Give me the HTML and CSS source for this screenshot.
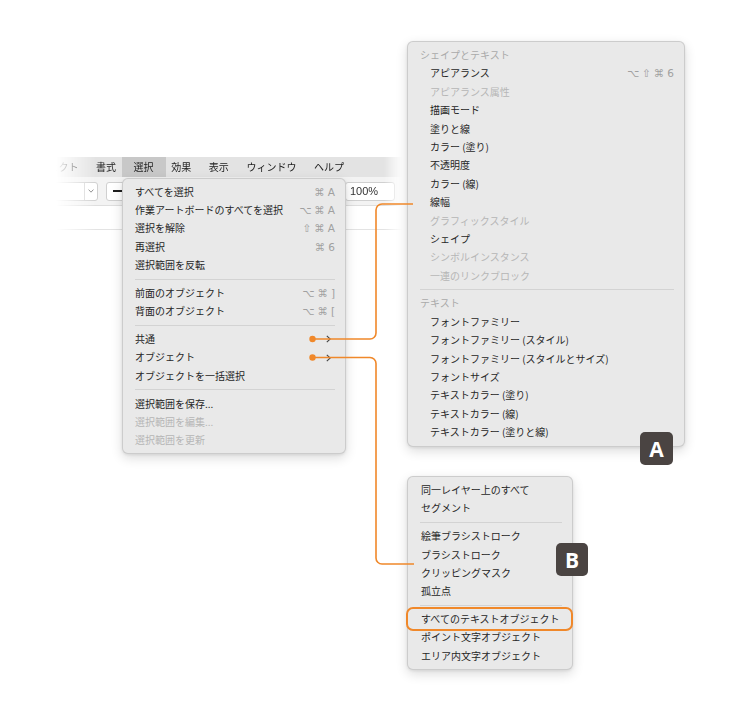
FILE: index.html
```html
<!DOCTYPE html>
<html lang="ja">
<head>
<meta charset="utf-8">
<title>選択メニュー</title>
<link rel="stylesheet" href="styles.css">
</head>
<body>
<div class="canvas">
  <div class="chrome">
    <div class="menubar">
      <span class="mb">オブジェクト</span>
      <span class="mb">書式</span>
      <span class="mb sel">選択</span>
      <span class="mb">効果</span>
      <span class="mb">表示</span>
      <span class="mb">ウィンドウ</span>
      <span class="mb">ヘルプ</span>
    </div>
    <div class="toolbar">
      <div class="field f1"><span class="ftxt"></span><span class="fchev"><svg width="6" height="4" viewBox="0 0 6 4"><path d="M0.6 0.6 L3 3.2 L5.4 0.6" fill="none" stroke="#777" stroke-width="0.9"/></svg></span></div>
      <div class="field f2"><span class="dash"></span></div>
      <div class="field f3">100%</div>
    </div>
    <div class="subbar"></div>
  </div>

  <div class="menu main">
    <div class="row"><span>すべてを選択</span><span class="sc"><span>⌘</span><span>A</span></span></div>
    <div class="row"><span>作業アートボードのすべてを選択</span><span class="sc"><span>⌥</span><span>⌘</span><span>A</span></span></div>
    <div class="row"><span>選択を解除</span><span class="sc"><span>⇧</span><span>⌘</span><span>A</span></span></div>
    <div class="row"><span>再選択</span><span class="sc"><span>⌘</span><span>6</span></span></div>
    <div class="row"><span>選択範囲を反転</span></div>
    <div class="sep"></div>
    <div class="row"><span>前面のオブジェクト</span><span class="sc"><span>⌥</span><span>⌘</span><span>]</span></span></div>
    <div class="row"><span>背面のオブジェクト</span><span class="sc"><span>⌥</span><span>⌘</span><span>[</span></span></div>
    <div class="sep"></div>
    <div class="row"><span>共通</span><svg class="chev" width="5" height="8" viewBox="0 0 5 8"><path d="M0.8 0.8 L4.2 4 L0.8 7.2" fill="none" stroke="#444" stroke-width="1.1"/></svg></div>
    <div class="row"><span>オブジェクト</span><svg class="chev" width="5" height="8" viewBox="0 0 5 8"><path d="M0.8 0.8 L4.2 4 L0.8 7.2" fill="none" stroke="#444" stroke-width="1.1"/></svg></div>
    <div class="row"><span>オブジェクトを一括選択</span></div>
    <div class="sep"></div>
    <div class="row"><span>選択範囲を保存...</span></div>
    <div class="row dis"><span>選択範囲を編集...</span></div>
    <div class="row dis"><span>選択範囲を更新</span></div>
  </div>

  <div class="menu suba">
    <div class="row hdr"><span>シェイプとテキスト</span></div>
    <div class="row ind"><span>アピアランス</span><span class="sc"><span>⌥</span><span>⇧</span><span>⌘</span><span>6</span></span></div>
    <div class="row ind dis"><span>アピアランス属性</span></div>
    <div class="row ind"><span>描画モード</span></div>
    <div class="row ind"><span>塗りと線</span></div>
    <div class="row ind"><span>カラー (塗り)</span></div>
    <div class="row ind"><span>不透明度</span></div>
    <div class="row ind"><span>カラー (線)</span></div>
    <div class="row ind"><span>線幅</span></div>
    <div class="row ind dis"><span>グラフィックスタイル</span></div>
    <div class="row ind"><span>シェイプ</span></div>
    <div class="row ind dis"><span>シンボルインスタンス</span></div>
    <div class="row ind dis"><span>一連のリンクブロック</span></div>
    <div class="sep"></div>
    <div class="row hdr"><span>テキスト</span></div>
    <div class="row ind"><span>フォントファミリー</span></div>
    <div class="row ind"><span>フォントファミリー (スタイル)</span></div>
    <div class="row ind"><span>フォントファミリー (スタイルとサイズ)</span></div>
    <div class="row ind"><span>フォントサイズ</span></div>
    <div class="row ind"><span>テキストカラー (塗り)</span></div>
    <div class="row ind"><span>テキストカラー (線)</span></div>
    <div class="row ind"><span>テキストカラー (塗りと線)</span></div>
  </div>

  <div class="menu subb">
    <div class="row"><span>同一レイヤー上のすべて</span></div>
    <div class="row"><span>セグメント</span></div>
    <div class="sep"></div>
    <div class="row"><span>絵筆ブラシストローク</span></div>
    <div class="row"><span>ブラシストローク</span></div>
    <div class="row"><span>クリッピングマスク</span></div>
    <div class="row"><span>孤立点</span></div>
    <div class="sep"></div>
    <div class="row hl"><span>すべてのテキストオブジェクト</span></div>
    <div class="row"><span>ポイント文字オブジェクト</span></div>
    <div class="row"><span>エリア内文字オブジェクト</span></div>
  </div>

  <svg class="wires" width="750" height="716" viewBox="0 0 750 716">
    <path d="M312 339 H370 A6 6 0 0 0 376 333 V210 A6 6 0 0 1 382 204 H413" fill="none" stroke="#f0882a" stroke-width="1.6"/>
    <path d="M312 357.5 H370 A6 6 0 0 1 376 363.5 V558 A6 6 0 0 0 382 564 H414" fill="none" stroke="#f0882a" stroke-width="1.6"/>
    <circle cx="312.5" cy="339" r="3.2" fill="#f0882a"/>
    <circle cx="312.5" cy="357.5" r="3.2" fill="#f0882a"/>
  </svg>

  <div class="badge ba">A</div>
  <div class="badge bb">B</div>
</div>
</body>
</html>
```

FILE: styles.css
```css
* { box-sizing: border-box; }

body {
  margin: 0;
  background: #ffffff;
  font-family: "Noto Sans CJK JP", "Noto Sans", sans-serif;
}

.canvas {
  position: relative;
  width: 750px;
  height: 716px;
  overflow: hidden;
  background: #ffffff;
}

/* application chrome behind the menu */
.chrome {
  position: absolute;
  left: 0;
  top: 157px;
  width: 402px;
  -webkit-mask-image: linear-gradient(to right, transparent 56px, #000 96px, #000 384px, transparent 402px);
  mask-image: linear-gradient(to right, transparent 56px, #000 96px, #000 384px, transparent 402px);
}

.menubar {
  display: flex;
  align-items: stretch;
  height: 20px;
  padding-left: 9.6px;
  background: #e3e3e3;
  font-size: 10px;
  color: #222222;
  white-space: nowrap;
}

.mb {
  display: flex;
  align-items: center;
  padding: 0 8.8px;
  line-height: 20px;
}

.mb.sel {
  padding: 0 12px;
  margin: 0 -3.2px;
  background: #c8c8c8;
}

.toolbar {
  display: flex;
  align-items: center;
  height: 29px;
  background: #f3f3f3;
  border-bottom: 1px solid #dedede;
}

.field {
  height: 19px;
  background: #ffffff;
  border: 1px solid #d0d0d0;
  border-radius: 3px;
  display: flex;
  align-items: center;
}

.f1 {
  margin-left: 30px;
  width: 68px;
}

.ftxt {
  width: 54px;
  height: 100%;
  border-right: 1px solid #d6d6d6;
}

.fchev {
  flex: 1;
  display: flex;
  align-items: center;
  justify-content: center;
}

.fchev svg { display: block; }

.f2 {
  margin-left: 8px;
  width: 130px;
  padding-left: 6px;
}

.dash {
  width: 10px;
  height: 2px;
  background: #1e1e1e;
}

.f3 {
  margin-left: auto;
  margin-right: 7px;
  width: 50px;
  padding-left: 4px;
  font-family: "Liberation Sans", Arial, sans-serif;
  font-size: 11px;
  color: #333333;
}

.subbar {
  height: 24px;
  background: #ffffff;
  border-bottom: 1px solid #e3e3e3;
}

/* menus */
.menu {
  position: absolute;
  background: #e9e9e9;
  border: 1px solid rgba(0, 0, 0, 0.12);
  border-radius: 6px;
  box-shadow: 0 4px 12px rgba(0, 0, 0, 0.14), 0 1px 3px rgba(0, 0, 0, 0.08);
  font-size: 10px;
  color: #262626;
}

.main {
  left: 122px;
  top: 178px;
  width: 224px;
  padding: 3.5px 0;
}

.suba {
  left: 407px;
  top: 41px;
  width: 278px;
  padding: 4px 0;
}

.subb {
  left: 407px;
  top: 476px;
  width: 166px;
  padding: 4px 0;
}

.row {
  position: relative;
  display: flex;
  align-items: center;
  justify-content: space-between;
  height: 18.4px;
  padding: 0 10px 0 12px;
  white-space: nowrap;
  line-height: 18.4px;
}

.subb .row { padding-left: 13px; }

.row.ind { padding-left: 22px; }

.row.dis { color: #b6b6b6; }

.row.hdr { color: #aaaaaa; }

.sep {
  height: 1px;
  margin: 4.2px 10px 4.2px 12px;
  background: #d3d3d3;
}

.sc {
  display: flex;
  align-items: center;
  gap: 3px;
  font-family: "DejaVu Sans", sans-serif;
  font-size: 10.5px;
  color: #a0a0a0;
}

.chev {
  display: block;
  margin-right: 4px;
}

.row.hl::after {
  content: "";
  position: absolute;
  left: -2px;
  right: -1px;
  top: -3px;
  bottom: -3px;
  border: 2px solid #f0882a;
  border-radius: 7px;
}

/* connectors */
.wires {
  position: absolute;
  left: 0;
  top: 0;
  pointer-events: none;
}

/* badges */
.badge {
  position: absolute;
  width: 33px;
  height: 33px;
  border-radius: 5px;
  background: #4a4442;
  color: #ffffff;
  font-family: "Open Sans", "Noto Sans", sans-serif;
  font-weight: 700;
  font-size: 21px;
  display: flex;
  align-items: center;
  justify-content: center;
}

.ba { left: 640px; top: 432px; }

.bb { left: 556px; top: 543px; width: 32px; }
```
